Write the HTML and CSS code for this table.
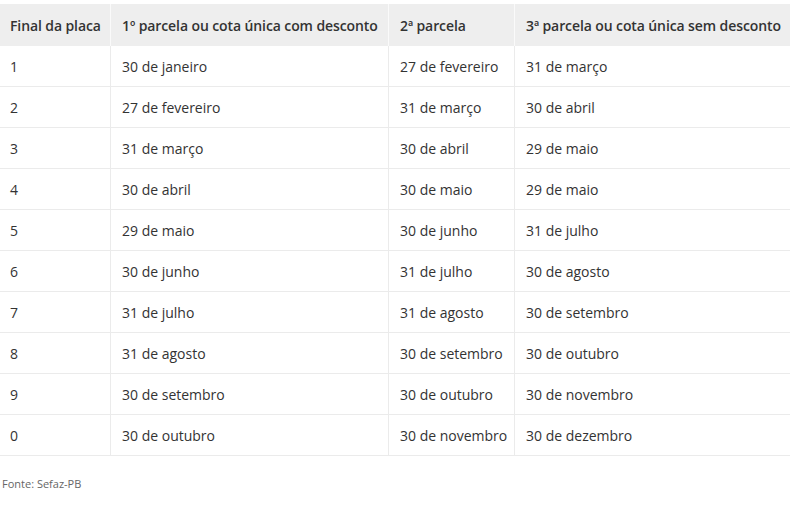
FILE: index.html
```html
<!DOCTYPE html>
<html lang="pt-BR">
<head>
<meta charset="utf-8">
<link rel="stylesheet" href="styles.css">
</head>
<body>
<div class="wrap">
<table class="ipva">
<colgroup>
<col class="c1"><col class="c2"><col class="c3"><col class="c4">
</colgroup>
<thead>
<tr><th>Final da placa</th><th>1º parcela ou cota única com desconto</th><th>2ª parcela</th><th>3ª parcela ou cota única sem desconto</th></tr>
</thead>
<tbody>
<tr><td>1</td><td>30 de janeiro</td><td>27 de fevereiro</td><td>31 de março</td></tr>
<tr><td>2</td><td>27 de fevereiro</td><td>31 de março</td><td>30 de abril</td></tr>
<tr><td>3</td><td>31 de março</td><td>30 de abril</td><td>29 de maio</td></tr>
<tr><td>4</td><td>30 de abril</td><td>30 de maio</td><td>29 de maio</td></tr>
<tr><td>5</td><td>29 de maio</td><td>30 de junho</td><td>31 de julho</td></tr>
<tr><td>6</td><td>30 de junho</td><td>31 de julho</td><td>30 de agosto</td></tr>
<tr><td>7</td><td>31 de julho</td><td>31 de agosto</td><td>30 de setembro</td></tr>
<tr><td>8</td><td>31 de agosto</td><td>30 de setembro</td><td>30 de outubro</td></tr>
<tr><td>9</td><td>30 de setembro</td><td>30 de outubro</td><td>30 de novembro</td></tr>
<tr><td>0</td><td>30 de outubro</td><td>30 de novembro</td><td>30 de dezembro</td></tr>
</tbody>
</table>
<p class="source">Fonte: Sefaz-PB</p>
</div>
</body>
</html>
```
FILE: styles.css
```css
html, body {
  margin: 0;
  padding: 0;
  background: #fff;
}
body {
  font-family: "Open Sans", "Liberation Sans", sans-serif;
  color: #333;
}
.wrap {
  padding: 4px 4px 0 0;
}
.ipva {
  width: 790px;
  table-layout: fixed;
  border-collapse: separate;
  border-spacing: 0;
  font-size: 14px;
}
.c1 { width: 110px; }
.c2 { width: 278px; }
.c3 { width: 126px; }
.c4 { width: 276px; }
.ipva th {
  background: #eeeeee;
  font-weight: 600;
  text-align: left;
  height: 42px;
  padding: 0 0 0 10px;
  box-sizing: border-box;
  color: #333;
  white-space: nowrap;
  letter-spacing: -0.1px;
}
.ipva th + th {
  border-left: 1px solid #fafafa;
  padding-left: 11px;
}
.ipva td {
  height: 41px;
  box-sizing: border-box;
  padding: 0 0 0 10px;
  border-bottom: 1px solid #ebebeb;
  white-space: nowrap;
}
.ipva td + td {
  border-left: 1px solid #ebebeb;
  padding-left: 11px;
}
.source {
  margin: 20px 0 0 2px;
  font-size: 11px;
  color: #666;
}
```
